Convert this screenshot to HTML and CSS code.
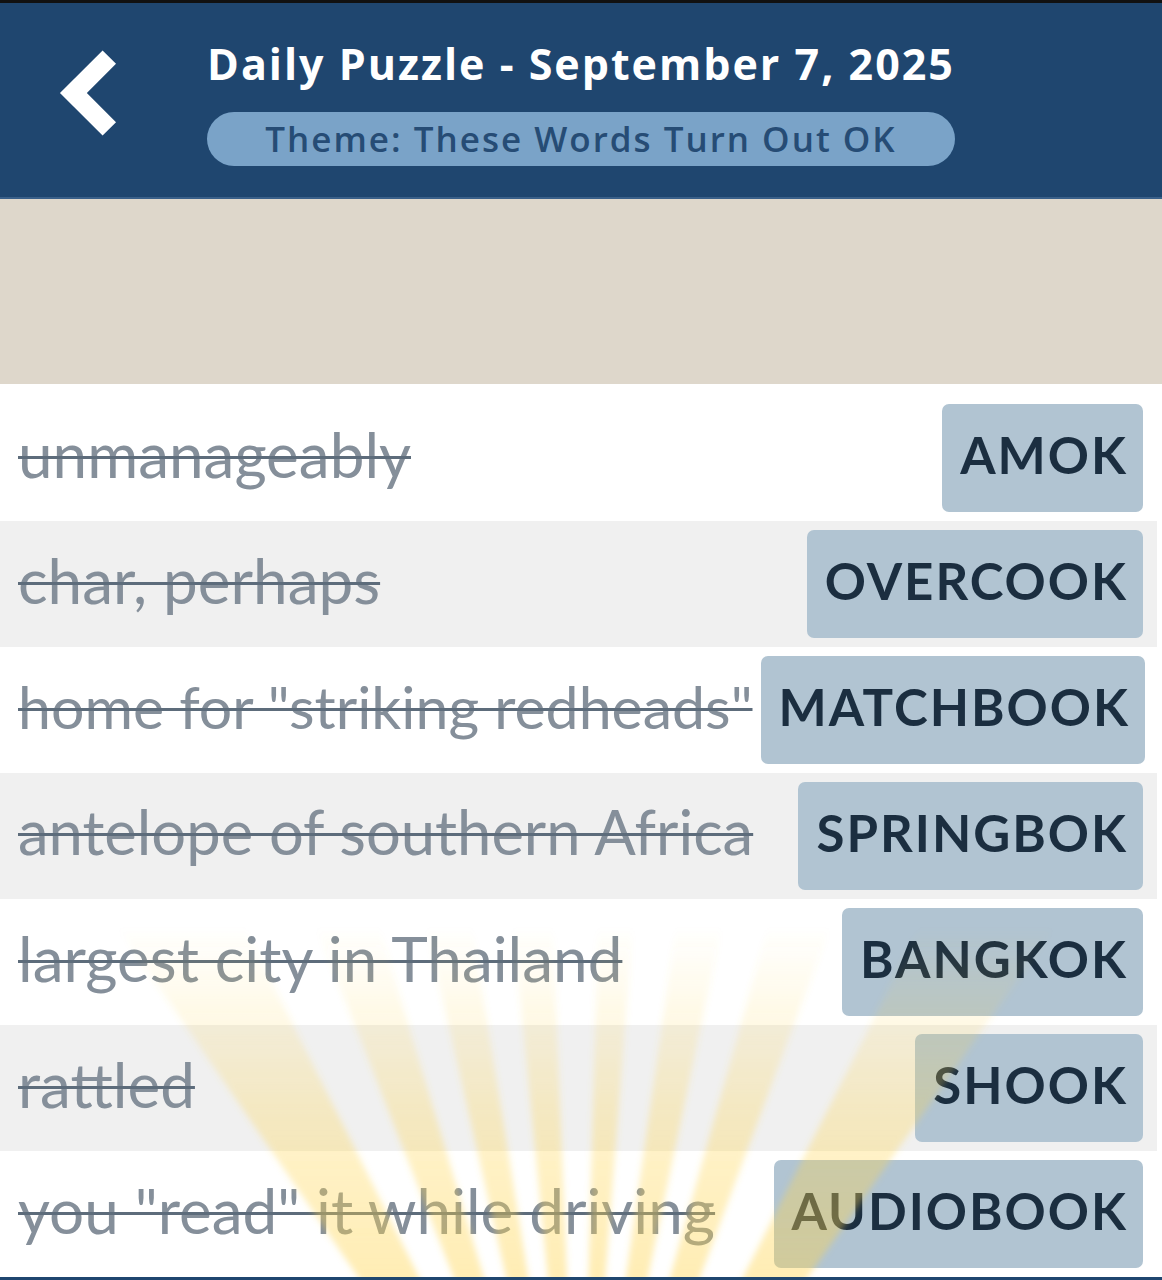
FILE: index.html
```html
<!DOCTYPE html>
<html lang="en">

<head>
    <meta charset="UTF-8">
    <title>Daily Puzzle</title>
    <link rel="stylesheet" href="styles.css">
</head>

<body>
    <header class="top">
        <button class="back" aria-label="Back">
            <svg width="64" height="92" viewBox="0 0 64 92">
                <polyline points="53.3,8.1 17.4,44 53.3,79.9" fill="none" stroke="#fff" stroke-width="19" stroke-linejoin="miter" stroke-linecap="butt" />
            </svg>
        </button>
        <div class="head-text">
            <h1>Daily Puzzle - September 7, 2025</h1>
            <div class="theme">Theme: These Words Turn Out OK</div>
        </div>
        <div></div>
    </header>

    <section class="banner"></section>

    <main class="list">
        <div class="row"><span class="clue">unmanageably</span><span class="answer">AMOK</span></div>
        <div class="row"><span class="clue">char, perhaps</span><span class="answer">OVERCOOK</span></div>
        <div class="row"><span class="clue fit-sm">home for "striking redheads"</span><span class="answer">MATCHBOOK</span></div>
        <div class="row"><span class="clue fit-md">antelope of southern Africa</span><span class="answer">SPRINGBOK</span></div>
        <div class="row"><span class="clue">largest city in Thailand</span><span class="answer">BANGKOK</span></div>
        <div class="row"><span class="clue">rattled</span><span class="answer">SHOOK</span></div>
        <div class="row"><span class="clue">you "read" it while driving</span><span class="answer">AUDIOBOOK</span></div>

        <!-- sunburst over the bottom rows -->
        <svg class="rays" viewBox="0 0 1162 350" preserveAspectRatio="none">
            <defs>
                <linearGradient id="fade" gradientUnits="userSpaceOnUse" x1="0" y1="350" x2="0" y2="0">
                    <stop offset="0" stop-color="#ffd54f" stop-opacity="0.42" />
                    <stop offset="0.45" stop-color="#ffd54f" stop-opacity="0.3" />
                    <stop offset="1" stop-color="#ffd54f" stop-opacity="0" />
                </linearGradient>
                <filter id="soft" x="-10%" y="-10%" width="120%" height="120%">
                    <feGaussianBlur stdDeviation="3" />
                </filter>
            </defs>
            <g fill="url(#fade)" filter="url(#soft)" id="ray-group"></g>
        </svg>
    </main>

    <footer class="bottom"></footer>

    <script>
        // rays: [angle from vertical, half width] in degrees
        let rays = [[-30.5, 4], [-19, 2.4], [-11, 1.9], [-4, 1.7], [3, 1.5], [10, 1.9], [18, 2.4], [31, 4.2]],
            cx = 580,
            cy = 673,
            r = 1000,
            group = document.querySelector("#ray-group");

        rays.forEach(ray => {
            let a1 = (ray[0] - ray[1]) * Math.PI / 180,
                a2 = (ray[0] + ray[1]) * Math.PI / 180;
            let p = document.createElementNS("http://www.w3.org/2000/svg", "polygon");
            p.setAttribute("points", cx + "," + cy + " " +
                (cx + r * Math.sin(a1)) + "," + (cy - r * Math.cos(a1)) + " " +
                (cx + r * Math.sin(a2)) + "," + (cy - r * Math.cos(a2)));
            group.appendChild(p);
        });
    </script>
</body>

</html>
```

FILE: styles.css
```css
body {
    margin: 0;
    background-color: white;
    font-family: Lato, "Open Sans", sans-serif;
}

.top {
    border-top: 3px solid #111;
    border-bottom: 2px solid #3a6089;
    background-color: #1f466f;
    height: 199px;
    box-sizing: border-box;
    padding: 36px 0 0;
    display: grid;
    grid-template-columns: 1fr auto 1fr;
    align-items: start;
}

.back {
    background: none;
    border: 0;
    padding: 0;
    margin: 10px 0 0 56px;
    width: 64px;
    height: 92px;
    justify-self: start;
}

.back svg {
    display: block;
}

.head-text {
    display: flex;
    flex-direction: column;
}

.head-text h1 {
    margin: 0;
    color: white;
    font-family: "Open Sans", Lato, sans-serif;
    font-size: 43px;
    line-height: 50px;
    font-weight: 700;
    letter-spacing: 2px;
    text-align: center;
}

.theme {
    margin-top: 23px;
    height: 54px;
    line-height: 54px;
    border-radius: 27px;
    background-color: #7aa3c8;
    color: #264c75;
    font-family: "Open Sans", Lato, sans-serif;
    font-size: 35px;
    font-weight: 600;
    letter-spacing: 2px;
    text-align: center;
}

.banner {
    height: 185px;
    background-color: #ded7cb;
}

.list {
    position: relative;
    padding: 11px 5px 0 0;
    overflow: hidden;
}

.row {
    height: 126px;
    box-sizing: border-box;
    padding: 9px 14px 9px 18px;
    display: flex;
    align-items: center;
    justify-content: space-between;
    gap: 8px;
}

.row:nth-child(even) {
    background-color: #f0f0f0;
}

.clue {
    color: #858f9a;
    font-size: 62px;
    line-height: 1;
    padding-bottom: 8px;
    white-space: nowrap;
    text-decoration: line-through;
    text-decoration-color: #5d6c7b;
    text-decoration-thickness: 3px;
}

.clue.fit-sm {
    font-size: 59px;
}

.clue.fit-md {
    font-size: 61.5px;
}

.answer {
    height: 108px;
    box-sizing: border-box;
    line-height: 102px;
    padding: 0 15px 6px 18px;
    border-radius: 7px;
    background-color: #b1c4d2;
    color: #1b2e40;
    font-size: 51px;
    font-weight: 700;
    letter-spacing: 2px;
}

.rays {
    position: absolute;
    left: 0;
    bottom: 0;
    width: 100%;
    height: 350px;
    pointer-events: none;
}

.bottom {
    height: 3px;
    background-color: #1f466f;
}
```
